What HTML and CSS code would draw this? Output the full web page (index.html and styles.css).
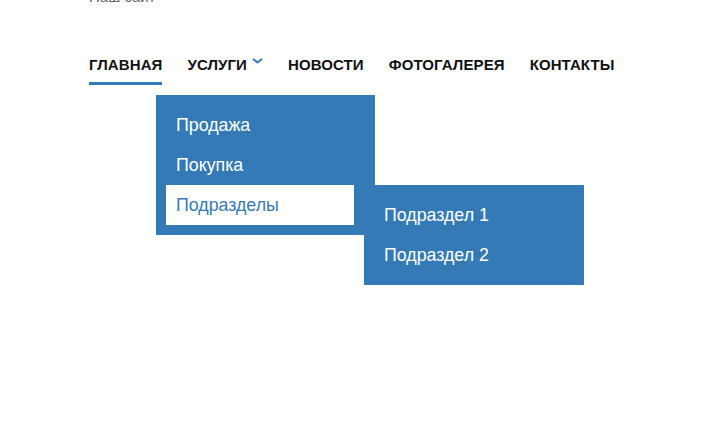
FILE: index.html
```html
<!DOCTYPE html>
<html lang="ru">
<head>
<meta charset="utf-8">
<title>Меню</title>
<link rel="stylesheet" href="styles.css">
</head>
<body>
<div class="page">
  <p class="site-title">Наш сайт</p>
  <nav class="nav">
    <ul class="menu">
      <li class="menu-item active"><a class="menu-link" href="#">Главная</a></li>
      <li class="menu-item">
        <a class="menu-link" href="#">Услуги<svg class="chev" width="11" height="6" viewBox="0 0 11 6"><path d="M1 1 L5.5 4.5 L10 1" fill="none" stroke="#337ab7" stroke-width="2"/></svg></a>
      </li>
      <li class="menu-item"><a class="menu-link" href="#">Новости</a></li>
      <li class="menu-item"><a class="menu-link" href="#">Фотогалерея</a></li>
      <li class="menu-item"><a class="menu-link" href="#">Контакты</a></li>
    </ul>
    <div class="dropdowns">
      <div class="panel panel-main">
        <div class="panel-item"><a class="panel-link" href="#">Продажа</a></div>
        <div class="panel-item"><a class="panel-link" href="#">Покупка</a></div>
        <div class="panel-item current"><a class="panel-link" href="#">Подразделы</a></div>
      </div>
      <div class="panel panel-sub">
        <div class="panel-item"><a class="panel-link" href="#">Подраздел 1</a></div>
        <div class="panel-item"><a class="panel-link" href="#">Подраздел 2</a></div>
      </div>
    </div>
  </nav>
</div>
</body>
</html>
```
FILE: styles.css
```css
* { box-sizing: border-box; }
html, body { margin: 0; padding: 0; background: #fff; }
body { font-family: "Liberation Sans", Arial, sans-serif; }
.page { padding-left: 89px; }
.site-title {
  margin: -12px 0 0 0;
  font-size: 15px;
  line-height: 17px;
  color: #666;
}
.nav { margin-top: 51px; }
.menu {
  list-style: none;
  margin: 0;
  padding: 0;
  display: flex;
  gap: 25px;
}
.menu-link {
  display: flex;
  align-items: flex-start;
  gap: 5px;
  color: #111;
  text-decoration: none;
  font-weight: bold;
  font-size: 15px;
  letter-spacing: 0.1px;
  line-height: 17px;
  text-transform: uppercase;
  padding-bottom: 9px;
  border-bottom: 3px solid transparent;
}
.menu-item.active .menu-link { border-bottom-color: #337ab7; }
.chev { margin-top: 2px; }
.dropdowns {
  display: flex;
  align-items: flex-start;
  margin-left: 67px;
  margin-top: 10px;
}
.panel {
  padding: 10px 21px 10px 10px;
  background: #337ab7;
  width: 219px;
  flex: none;
}
.panel-item { width: 188px; }
.panel-link {
  display: block;
  height: 40px;
  line-height: 40px;
  padding-left: 10px;
  color: #fff;
  text-decoration: none;
  font-size: 17.8px;
}
.panel-item.current > .panel-link { background: #fff; color: #337ab7; }
.panel-sub {
  width: 220px;
  margin-left: -11px;
  margin-top: 90px;
  padding-right: 10px;
}
.panel-sub .panel-item { width: 200px; }
```
